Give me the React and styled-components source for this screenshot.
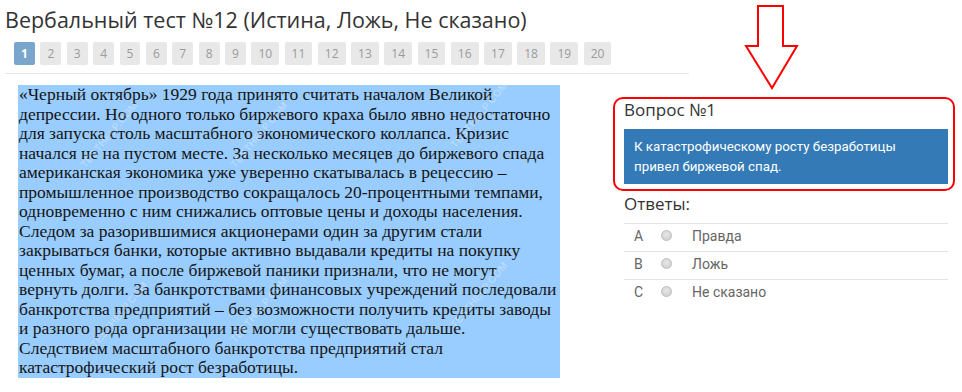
import React from 'react';
import styled, { createGlobalStyle } from 'styled-components';

const GlobalStyle = createGlobalStyle`
  body {
    margin: 0;
    background: #fff;
    font-family: 'Open Sans', 'Liberation Sans', sans-serif;
  }
`;

const Page = styled.div`
  position: relative;
  width: 962px;
  height: 392px;
  overflow: hidden;
`;

const Header = styled.div`
  width: 684px;
  padding: 8px 0 0 5px;
`;

const Title = styled.h1`
  margin: 0;
  font-size: 21.5px;
  line-height: 23px;
  font-weight: 400;
  color: #333;
`;

const Pager = styled.div`
  display: flex;
  gap: 5.5px;
  margin: 11px 0 0 9px;
`;

const PageBtn = styled.span`
  display: inline-block;
  height: 23px;
  line-height: 23px;
  padding: 0 7px;
  border-radius: 2px;
  font-size: 12px;
  font-weight: ${(p) => (p.active ? 700 : 400)};
  color: ${(p) => (p.active ? '#fff' : '#9a9a9a')};
  background: ${(p) => (p.active ? '#7aa6cd' : '#e8e8e8')};
`;

const Rule = styled.div`
  margin-top: 8px;
  height: 1px;
  background: #e6e6e6;
`;

const Body = styled.div`
  display: flex;
  align-items: flex-start;
  margin-top: 11px;
  padding-left: 18px;
`;

const TextPanel = styled.div`
  position: relative;
  width: 541px;
  padding-left: 1px;
  background: #99ccff;
  font-family: 'Liberation Serif', 'Times New Roman', serif;
  font-size: 17.5px;
  line-height: 19.5px;
  color: #141414;
`;

const Line = styled.span`
  display: block;
  white-space: nowrap;
`;

const Watermark = styled.span`
  position: absolute;
  transform: rotate(-50deg);
  font-family: 'Liberation Sans', sans-serif;
  font-size: 10px;
  letter-spacing: 0.5px;
  color: rgba(255, 255, 255, 0.4);
  white-space: nowrap;
`;

const Side = styled.div`
  margin: 12px 0 0 53px;
  width: 342px;
`;

const QuestionBox = styled.div`
  border: 2px solid #f00;
  border-radius: 10px;
  padding: 1px 5px 5px 9px;
`;

const SideHeading = styled.div`
  font-size: 17px;
  line-height: 20px;
  color: #333;
  margin-top: ${(p) => p.top || 0}px;
  padding-left: ${(p) => p.indent || 0}px;
`;

const Statement = styled.div`
  margin-top: 9px;
  background: #337ab7;
  color: #fff;
  font-family: Roboto, 'Liberation Sans', sans-serif;
  font-size: 13.3px;
  line-height: 20px;
  padding: 8px 10px 7px;
`;

const Answers = styled.div`
  margin: 9px 7px 0 11px;
`;

const AnswerRow = styled.div`
  display: flex;
  align-items: center;
  border-top: 1px solid #e3e3e3;
  padding: 2px 0 5px;
  font-family: Roboto, 'Liberation Sans', sans-serif;
  font-size: 14px;
  line-height: 20px;
  color: #666;
`;

const Letter = styled.span`
  width: 27px;
  padding-left: 10px;
`;

const Radio = styled.span`
  width: 9px;
  height: 9px;
  border-radius: 50%;
  border: 1px solid #bdbdbd;
  background: radial-gradient(circle at 50% 40%, #e8e8e8, #c9c9c9);
  margin-top: -1px;
`;

const AnswerText = styled.span`
  margin-left: 20px;
`;

const Arrow = styled.svg`
  position: absolute;
  left: 740px;
  top: 0;
`;

const pages = Array.from({ length: 20 }, (_, i) => i + 1);

const lines = [
  '«Черный октябрь» 1929 года принято считать началом Великой',
  'депрессии. Но одного только биржевого краха было явно недостаточно',
  'для запуска столь масштабного экономического коллапса. Кризис',
  'начался не на пустом месте. За несколько месяцев до биржевого спада',
  'американская экономика уже уверенно скатывалась в рецессию –',
  'промышленное производство сокращалось 20-процентными темпами,',
  'одновременно с ним снижались оптовые цены и доходы населения.',
  'Следом за разорившимися акционерами один за другим стали',
  'закрываться банки, которые активно выдавали кредиты на покупку',
  'ценных бумаг, а после биржевой паники признали, что не могут',
  'вернуть долги. За банкротствами финансовых учреждений последовали',
  'банкротства предприятий – без возможности получить кредиты заводы',
  'и разного рода организации не могли существовать дальше.',
  'Следствием масштабного банкротства предприятий стал',
  'катастрофический рост безработицы.',
];

const marks = [
  { x: 50, y: 40 },
  { x: 200, y: 40 },
  { x: 420, y: 20 },
  { x: 60, y: 220 },
  { x: 200, y: 215 },
  { x: 420, y: 200 },
];

const answers = [
  { key: 'A', text: 'Правда' },
  { key: 'B', text: 'Ложь' },
  { key: 'C', text: 'Не сказано' },
];

export default function App() {
  return (
    <Page>
      <GlobalStyle />
      <Header>
        <Title>Вербальный тест №12 (Истина, Ложь, Не сказано)</Title>
        <Pager>
          {pages.map((n) => (
            <PageBtn key={n} active={n === 1}>
              {n}
            </PageBtn>
          ))}
        </Pager>
        <Rule />
      </Header>

      <Body>
        <TextPanel>
          {lines.map((l, i) => (
            <Line key={i}>{l}</Line>
          ))}
          {marks.map((m, i) => (
            <Watermark key={i} style={{ left: m.x, top: m.y }}>
              TESTHELP.COM
            </Watermark>
          ))}
        </TextPanel>

        <Side>
          <QuestionBox>
            <SideHeading>Вопрос №1</SideHeading>
            <Statement>
              К катастрофическому росту безработицы
              <br />
              привел биржевой спад.
            </Statement>
          </QuestionBox>
          <SideHeading top={3} indent={11}>
            Ответы:
          </SideHeading>
          <Answers>
            {answers.map((a) => (
              <AnswerRow key={a.key}>
                <Letter>{a.key}</Letter>
                <Radio />
                <AnswerText>{a.text}</AnswerText>
              </AnswerRow>
            ))}
          </Answers>
        </Side>
      </Body>

      <Arrow width="64" height="94" viewBox="740 0 64 94">
        <polygon
          points="758,6 783,6 783,46 797,46 772,88 746,46 758,46"
          fill="#fff"
          stroke="#f00"
          strokeWidth="2"
        />
      </Arrow>
    </Page>
  );
}
